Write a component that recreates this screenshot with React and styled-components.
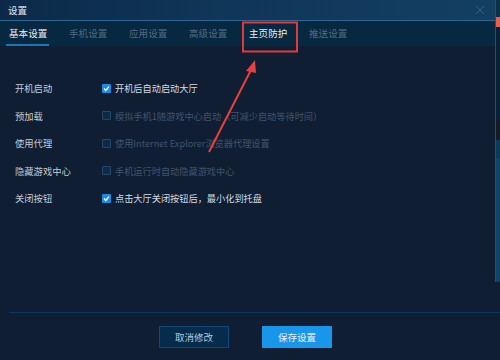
import React from 'react'
import styled, { createGlobalStyle } from 'styled-components';

const tabs = ['基本设置', '手机设置', '应用设置', '高级设置', '主页防护', '推送设置'];

const options = [
  { label: '开机启动', text: '开机后自动启动大厅', checked: true },
  { label: '预加载', text: '模拟手机1随游戏中心启动（可减少启动等待时间）' },
  { label: '使用代理', text: '使用Internet Explorer浏览器代理设置' },
  { label: '隐藏游戏中心', text: '手机运行时自动隐藏游戏中心' },
  { label: '关闭按钮', text: '点击大厅关闭按钮后，最小化到托盘', checked: true },
];

const App = () => {
  return (
    <Whole>
      <GlobalStyle />
      <Top>
        <Main>
          <TitleBar>
            <Title>设置</Title>
            <Close>
              <svg width="10" height="10" viewBox="0 0 10 10">
                <path d="M1 1 L9 9 M9 1 L1 9" stroke="#3c5e7c" strokeWidth="1" />
              </svg>
            </Close>
          </TitleBar>
          <TabBar>
            {tabs.map((t, idx) => (
              <Tab key={t} active={idx === 0} bright={idx === 4}>{t}</Tab>
            ))}
          </TabBar>
          <Body>
            {options.map((o) => (
              <Row key={o.label}>
                <Label>{o.label}</Label>
                <Check checked={o.checked}>
                  {o.checked && (
                    <svg width="9" height="9" viewBox="0 0 9 9">
                      <path d="M2 4.6 L3.8 6.4 L7 2.6" stroke="#fff" strokeWidth="1.4" fill="none" />
                    </svg>
                  )}
                </Check>
                <OptionText checked={o.checked}>{o.text}</OptionText>
              </Row>
            ))}
          </Body>
        </Main>
        <Strip>
          <StripPart h={17} color="#0c3048" />
          <StripPart h={10} color="#e8604c" />
          <StripPart h={93} color="#0a2238" />
          <StripPart h={20} color="#141c28" />
          <StripPart h={18} color="#0e3a5a" />
          <StripPart h={124} color="#104469" />
        </Strip>
      </Top>
      <Footer>
        <Divider />
        <Buttons>
          <Btn>取消修改</Btn>
          <Btn primary>保存设置</Btn>
        </Buttons>
      </Footer>
      <Annotation width="500" height="360" viewBox="0 0 500 360">
        <rect x="243" y="22.5" width="54" height="29" fill="none" stroke="#e03a3a" strokeWidth="2" />
        <path d="M209 152 L252 68" stroke="#e8403c" strokeWidth="2" />
        <path d="M255 60 L246 71 L256 73 Z" fill="#e8403c" />
      </Annotation>
    </Whole>
  );
}

export default App

const GlobalStyle = createGlobalStyle`
  body {
    margin: 0;
    background: #0f1e33;
    font-family: "Noto Sans CJK SC", "Noto Sans", sans-serif;
  }
`;

const Whole = styled.div`
  position: relative;
  width: 500px;
  height: 360px;
  background: #0f1e33;
  overflow: hidden;
`;

const Top = styled.div`
  display: flex;
  height: 282px;
`;

const Main = styled.div`
  display: flex;
  flex-direction: column;
  width: 496px;
  border-right: 1px solid #24506e;
  box-sizing: border-box;
`;

const TitleBar = styled.div`
  display: flex;
  align-items: center;
  justify-content: space-between;
  height: 20px;
  padding: 0 10px 0 8px;
  background: linear-gradient(90deg, #0c2a48 0%, #10375a 50%, #133f63 100%);
  border-bottom: 1px solid #2d6791;
`;

const Title = styled.div`
  color: #e4ecf4;
  font-size: 9.5px;
  line-height: 20px;
`;

const Close = styled.div`
  display: flex;
  align-items: center;
  margin-top: -1px;
`;

const TabBar = styled.div`
  display: flex;
  height: 25px;
  padding-left: 6px;
  background: #062840;
`;

const Tab = styled.div`
  width: 60px;
  font-size: 9.5px;
  letter-spacing: 0.1px;
  line-height: 25px;
  padding-left: 3px;
  box-sizing: border-box;
  color: ${props => (props.active || props.bright) ? '#e8eef4' : '#4e6a84'};
  position: relative;
  &::after {
    content: '';
    display: ${props => props.active ? 'block' : 'none'};
    position: absolute;
    left: 0;
    bottom: 0;
    width: 43px;
    height: 2px;
    background: #1c74b0;
  }
`;

const Body = styled.div`
  display: flex;
  flex-direction: column;
  gap: 9px;
  padding: 33px 0 0 15px;
`;

const Row = styled.div`
  display: flex;
  align-items: center;
  height: 18.5px;
`;

const Label = styled.div`
  width: 87px;
  font-size: 9.3px;
  color: #c4ccd6;
`;

const Check = styled.div`
  display: flex;
  align-items: center;
  justify-content: center;
  width: 9px;
  height: 9px;
  margin-right: 4px;
  border-radius: 1px;
  box-sizing: border-box;
  background: ${props => props.checked ? '#1b8ce6' : '#0f2a44'};
  border: ${props => props.checked ? 'none' : '1px solid #21486a'};
`;

const OptionText = styled.div`
  font-size: 9.2px;
  color: ${props => props.checked ? '#d4dbe4' : '#40546c'};
  white-space: nowrap;
`;

const Strip = styled.div`
  display: flex;
  flex-direction: column;
  width: 4px;
`;

const StripPart = styled.div`
  height: ${props => props.h}px;
  background: ${props => props.color};
`;

const Footer = styled.div`
  display: flex;
  flex-direction: column;
  height: 78px;
`;

const Divider = styled.div`
  height: 1px;
  margin: 30px 0 0 9px;
  background: #0c3a62;
`;

const Buttons = styled.div`
  display: flex;
  gap: 33px;
  padding-top: 13px;
  padding-left: 159px;
`;

const Btn = styled.div`
  display: flex;
  align-items: center;
  justify-content: center;
  width: 70px;
  height: 22px;
  box-sizing: border-box;
  font-size: 9.5px;
  color: ${props => props.primary ? '#e8f2fc' : '#b8c8d8'};
  background: ${props => props.primary ? '#1896ea' : '#062c4c'};
  border: 1px solid ${props => props.primary ? '#1896ea' : '#0e4a78'};
`;

const Annotation = styled.svg`
  position: absolute;
  left: 0;
  top: 0;
  pointer-events: none;
`;
